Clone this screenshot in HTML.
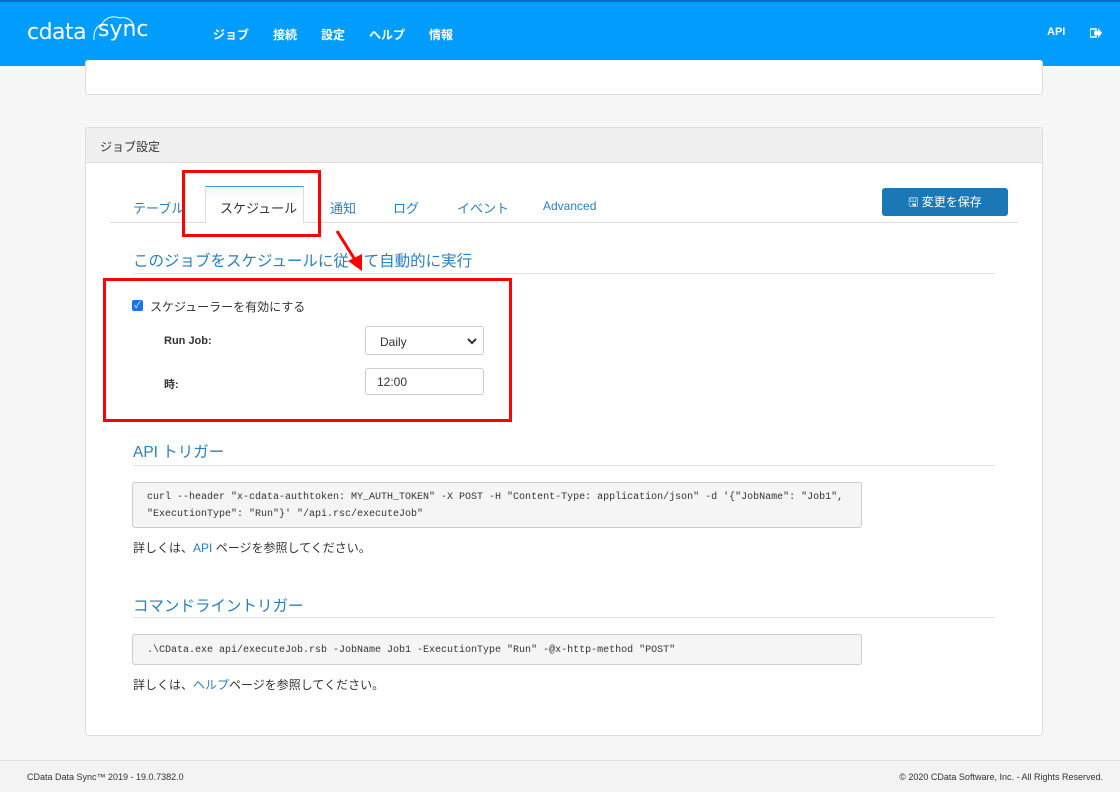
<!DOCTYPE html>
<html><head><meta charset="utf-8"><style>
*{box-sizing:border-box;margin:0;padding:0}
body{width:1120px;height:792px;overflow:hidden;background:#f7f7f7;font-family:"Liberation Sans","Noto Sans CJK JP",sans-serif;font-size:12px;color:#333;position:relative}
.a{position:absolute}
.hdr{left:0;top:0;width:1120px;height:66px;background:#009dff;border-top:2px solid #0a6fc2}
.nav{color:#fff;font-size:12px;font-weight:bold;top:26px}
.card{background:#fff;border:1px solid #ddd;border-radius:3px}
.h{color:#2a7fba;font-size:15.5px}
.line{height:1px;background:#e2e2e2}
.code{background:#f5f5f5;border:1px solid #ccc;border-radius:3px;color:#333;padding:6px 14px;white-space:nowrap;font-family:"Liberation Mono",monospace;font-size:10px;line-height:17px}
.red{border:3px solid #f00}
.tab{top:198px;color:#2a7fba;font-size:13px}
a{color:#2a7fba;text-decoration:none}
</style></head><body>
<div class="a hdr"></div>
<div class="a" style="left:27px;top:20px;color:#fff;font-size:22px;letter-spacing:-0.5px;font-family:'DejaVu Sans',sans-serif">cdata</div>
<div class="a" style="left:98px;top:17px;color:#fff;font-size:22px;font-family:'DejaVu Sans',sans-serif">sync</div>
<svg class="a" style="left:90px;top:12px" width="55" height="30"><path d="M4 28 Q3 16 12 12 Q18 2 30 6 Q40 4 44 14" fill="none" stroke="#fff" stroke-width="1"/></svg>
<div class="a nav" style="left:213px">ジョブ</div>
<div class="a nav" style="left:273px">接続</div>
<div class="a nav" style="left:321px">設定</div>
<div class="a nav" style="left:369px">ヘルプ</div>
<div class="a nav" style="left:429px">情報</div>
<div class="a nav" style="left:1047px;font-size:11px">API</div>
<svg class="a" style="left:1090px;top:28px" width="12" height="10"><rect x="0" y="1" width="6" height="8" fill="none" stroke="#fff" stroke-width="1.5"/><path d="M4 3h4V0l4 5-4 5V7H4z" fill="#fff"/></svg>

<div class="a card" style="left:85px;top:60px;width:958px;height:35px;border-top:none"></div>

<div class="a card" style="left:85px;top:127px;width:958px;height:609px"></div>
<div class="a" style="left:86px;top:128px;width:956px;height:35px;background:#f0f0f0;border-bottom:1px solid #ddd"></div>
<div class="a" style="left:100px;top:138px;font-size:12px">ジョブ設定</div>

<div class="a line" style="left:110px;top:222px;width:908px;background:#ddd"></div>
<div class="a" style="left:205px;top:186px;width:99px;height:37px;background:linear-gradient(#eef6fc,#fff 40%);border:1px solid #ddd;border-top:1px solid #3a9ad9;border-bottom:none"></div>
<div class="a tab" style="left:133px">テーブル</div>
<div class="a tab" style="left:220px;color:#333">スケジュール</div>
<div class="a tab" style="left:330px">通知</div>
<div class="a tab" style="left:393px">ログ</div>
<div class="a tab" style="left:457px">イベント</div>
<div class="a tab" style="left:543px;font-size:12px;top:199px">Advanced</div>
<div class="a" style="left:882px;top:188px;width:126px;height:28px;background:#1b78b5;border-radius:3px;color:#fff;font-size:12px;text-align:center;line-height:28px">🖫 変更を保存</div>
<div class="a red" style="left:182px;top:170px;width:139px;height:67px"></div>

<div class="a h" style="left:133px;top:249px">このジョブをスケジュールに従って自動的に実行</div>
<div class="a line" style="left:133px;top:273px;width:862px"></div>
<svg class="a" style="left:330px;top:225px" width="40" height="50"><line x1="7" y1="6" x2="27" y2="38" stroke="#f00" stroke-width="3"/><path d="M18 36 L32 46 L32 29 Z" fill="#f00"/></svg>

<div class="a" style="left:132px;top:300px;width:11px;height:11px;background:#1a73e8;border-radius:2px;color:#fff;font-size:9px;line-height:11px;text-align:center">✓</div>
<div class="a" style="left:150px;top:298px;font-size:12px">スケジューラーを有効にする</div>
<div class="a" style="left:164px;top:335px;font-weight:bold;font-size:11px">Run Job:</div>
<div class="a" style="left:365px;top:326px;width:119px;height:29px;border:1px solid #ccc;border-radius:3px;padding:8px 14px;font-size:12px">Daily<svg style="position:absolute;right:6px;top:11px" width="10" height="7"><path d="M1 1l4 4 4-4" fill="none" stroke="#333" stroke-width="2"/></svg></div>
<div class="a" style="left:164px;top:376px;font-weight:bold;font-size:11px">時:</div>
<div class="a" style="left:365px;top:368px;width:119px;height:27px;border:1px solid #ccc;border-radius:3px;padding:6px 11px;font-size:12px">12:00</div>
<div class="a red" style="left:103px;top:278px;width:409px;height:144px"></div>

<div class="a h" style="left:133px;top:440px">API トリガー</div>
<div class="a line" style="left:133px;top:465px;width:862px"></div>
<div class="a code" style="left:132px;top:482px;width:730px;height:46px">curl --header "x-cdata-authtoken: MY_AUTH_TOKEN" -X POST -H "Content-Type: application/json" -d '{"JobName": "Job1",<br>"ExecutionType": "Run"}' "/api.rsc/executeJob"</div>
<div class="a" style="left:133px;top:539px">詳しくは、<a>API</a> ページを参照してください。</div>

<div class="a h" style="left:133px;top:594px">コマンドライントリガー</div>
<div class="a line" style="left:133px;top:617px;width:862px"></div>
<div class="a code" style="left:132px;top:634px;width:730px;height:31px;padding-top:7px">.\CData.exe api/executeJob.rsb -JobName Job1 -ExecutionType "Run" -@x-http-method "POST"</div>
<div class="a" style="left:133px;top:676px">詳しくは、<a>ヘルプ</a>ページを参照してください。</div>

<div class="a" style="left:0;top:760px;width:1120px;height:32px;background:#f3f3f3;border-top:1px solid #ddd"></div>
<div class="a" style="left:27px;top:772px;font-size:9px">CData Data Sync™ 2019 - 19.0.7382.0</div>
<div class="a" style="right:17px;top:772px;font-size:9px">© 2020 CData Software, Inc. - All Rights Reserved.</div>
</body></html>
